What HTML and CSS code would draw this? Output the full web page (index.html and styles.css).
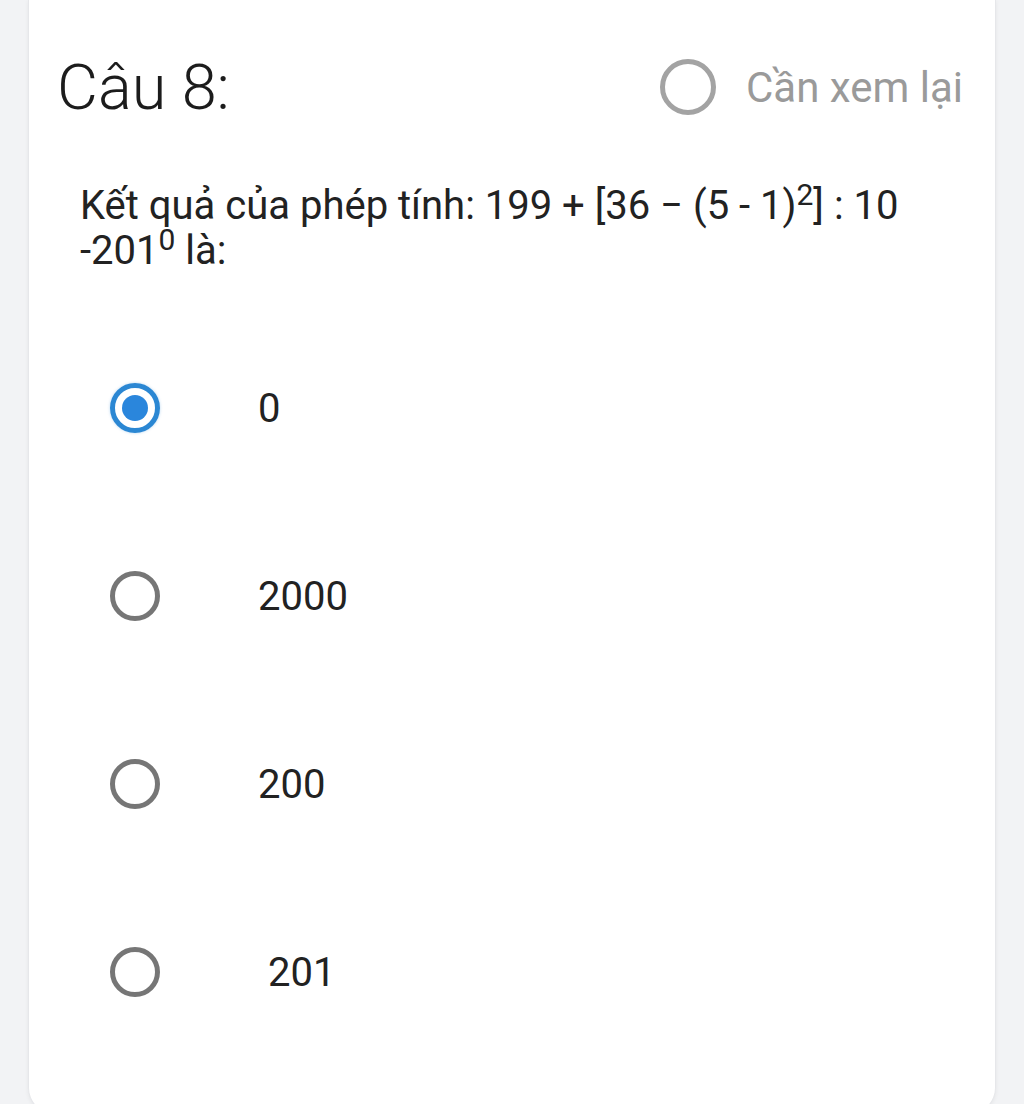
FILE: index.html
```html
<!DOCTYPE html>
<html lang="vi">
<head>
    <meta charset="UTF-8">
    <meta name="viewport" content="width=device-width, initial-scale=1.0">
    <title>Câu 8</title>
    <link rel="stylesheet" href="styles.css">
</head>
<body>
    <div class="card">
        <!-- Header -->
        <div class="question-head">
            <h2>Câu 8:</h2>
            <label class="review">
                <span class="radio radio-light"></span>
                <span>Cần xem lại</span>
            </label>
        </div>

        <!-- Question -->
        <p class="question-text">Kết quả của phép tính: 199 + [36 − (5 - 1)<sup>2</sup>] : 10 -201<sup>0</sup> là:</p>

        <!-- Answers -->
        <div class="options">
            <div class="option">
                <span class="radio checked"></span>
                <span class="option-text">0</span>
            </div>
            <div class="option">
                <span class="radio"></span>
                <span class="option-text">2000</span>
            </div>
            <div class="option">
                <span class="radio"></span>
                <span class="option-text">200</span>
            </div>
            <div class="option">
                <span class="radio"></span>
                <span class="option-text">&nbsp;201</span>
            </div>
        </div>
    </div>
</body>
</html>
```

FILE: styles.css
```css
body {
    font-family: Roboto, 'Noto Sans', sans-serif;
    margin: 0;
    height: 1104px;
    overflow: hidden;
    background: #f2f3f5;
}

.card {
    background: white;
    margin: 0 28px;
    height: 1114px;
    box-sizing: border-box;
    border: 1px solid #e6e7ea;
    border-top: none;
    border-radius: 0 0 26px 26px;
    box-shadow: 0 1px 4px rgba(0, 0, 0, 0.06);
}

.question-head {
    display: flex;
    align-items: center;
    justify-content: space-between;
    padding: 55px 32px 0 28px;
    height: 64px;
}

h2 {
    margin: 0;
    font-size: 63px;
    font-weight: 300;
    color: #1c1c1c;
}

.review {
    display: flex;
    align-items: center;
    gap: 30px;
    font-size: 42px;
    color: #9a9a9a;
}

.question-text {
    margin: 64px 60px 0 51px;
    font-size: 40px;
    line-height: 45px;
    color: #222;
}

.question-text sup {
    font-size: 30px;
    line-height: 0;
}

.options {
    margin-top: 41px;
    display: flex;
    flex-direction: column;
}

.option {
    display: flex;
    align-items: center;
    height: 188px;
    padding-left: 81px;
}

.option-text {
    margin-left: 98px;
    font-size: 40px;
    color: #222;
}

.radio {
    width: 50px;
    height: 50px;
    box-sizing: border-box;
    border: 5px solid #767676;
    border-radius: 50%;
    flex-shrink: 0;
    position: relative;
}

.radio-light {
    width: 56px;
    height: 56px;
    border-color: #a3a3a3;
}

.radio.checked {
    border-color: #2b87d3;
    box-shadow: 0 0 3px rgba(43, 135, 211, 0.35);
}

.radio.checked::after {
    content: '';
    position: absolute;
    top: 7px;
    left: 7px;
    width: 26px;
    height: 26px;
    border-radius: 50%;
    background: #2a86dc;
}
```
